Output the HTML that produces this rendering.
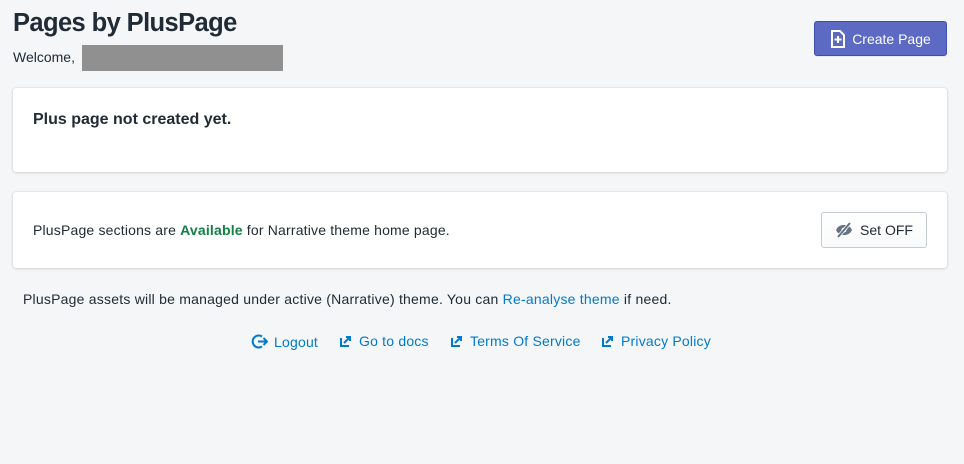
<!DOCTYPE html>
<html><head><style>
*{margin:0;padding:0;box-sizing:border-box}
body{width:964px;height:464px;background:#f4f6f8;font-family:"Liberation Sans",sans-serif;color:#212b36;position:relative;overflow:hidden}
.abs{position:absolute}
h1{position:absolute;left:13px;top:9px;font-size:25.5px;font-weight:bold;color:#212b36;letter-spacing:-0.6px}
.wel{left:13px;top:49px;font-size:14px;color:#212b36}
.grey{left:82px;top:45px;width:201px;height:26px;background:#909090}
.btn1{left:814px;top:21px;width:133px;height:35px;background:#5c6ac4;border:1px solid #3f4eae;border-radius:3px;color:#fff;font-size:14px;display:flex;align-items:center;justify-content:center;gap:6px;box-shadow:0 1px 0 rgba(22,29,37,.05)}
.card{left:13px;width:934px;background:#fff;border-radius:3px;box-shadow:0 0 0 1px rgba(63,63,68,.05),0 1px 3px 0 rgba(63,63,68,.15)}
.t1{left:33px;top:111px;font-size:16px;font-weight:bold}
.t2{left:33px;top:222px;font-size:14px;letter-spacing:0.18px}
.btn2{left:821px;top:212px;width:106px;height:36px;background:linear-gradient(#fff,#f9fafb);border:1px solid #c4cdd5;border-radius:3px;font-size:14px;display:flex;align-items:center;justify-content:center;gap:7px;color:#212b36}
.t3{left:23px;top:291px;font-size:14px;letter-spacing:0.22px}
a{color:#007ace;text-decoration:none}
.links{top:333px;font-size:14px;color:#007ace;display:flex;align-items:center;letter-spacing:0.2px}
</style></head><body>
<h1>Pages by PlusPage</h1>
<div class="abs wel">Welcome,</div>
<div class="abs grey"></div>
<div class="abs btn1"><svg width="16" height="18" viewBox="0 0 16 18"><path d="M2 1h8l4 4v12H2z" fill="none" stroke="#fff" stroke-width="2"/><path d="M8 6v7M4.5 9.5h7" stroke="#fff" stroke-width="2"/></svg>Create Page</div>
<div class="abs card" style="top:88px;height:84px"></div>
<div class="abs t1">Plus page not created yet.</div>
<div class="abs card" style="top:192px;height:76px"></div>
<div class="abs t2">PlusPage sections are <b style="color:#108043">Available</b> for Narrative theme home page.</div>
<div class="abs btn2"><svg width="18" height="16" viewBox="0 0 18 16"><path d="M1 8c2-4 5-5 8-5s6 1 8 5c-2 4-5 5-8 5S3 12 1 8z" fill="#637381"/><circle cx="9" cy="8" r="2.5" fill="#fff"/><path d="M3 15L15 1" stroke="#fff" stroke-width="3.5"/><path d="M3 15L15 1" stroke="#637381" stroke-width="2"/></svg>Set OFF</div>
<div class="abs t3">PlusPage assets will be managed under active (Narrative) theme. You can <a>Re-analyse theme</a> if need.</div>
<div class="abs links" style="left:251px"><svg width="17" height="17" viewBox="0 0 17 17" style="margin-right:6px"><path d="M11 3.5A6 6 0 1 0 11 13.5" fill="none" stroke="#007ace" stroke-width="2"/><path d="M7 8.5h9M12.5 5l3.5 3.5-3.5 3.5" fill="none" stroke="#007ace" stroke-width="2"/></svg>Logout</div>
<div class="abs links" style="left:340px"><svg width="11" height="11" viewBox="0 0 11 11" style="margin-right:8px"><path d="M1 2v8h8" fill="none" stroke="#007ace" stroke-width="2"/><path d="M4 7l6-6M6 1h4v4" fill="none" stroke="#007ace" stroke-width="2"/></svg>Go to docs</div>
<div class="abs links" style="left:451px"><svg width="11" height="11" viewBox="0 0 11 11" style="margin-right:8px"><path d="M1 2v8h8" fill="none" stroke="#007ace" stroke-width="2"/><path d="M4 7l6-6M6 1h4v4" fill="none" stroke="#007ace" stroke-width="2"/></svg>Terms Of Service</div>
<div class="abs links" style="left:602px"><svg width="11" height="11" viewBox="0 0 11 11" style="margin-right:8px"><path d="M1 2v8h8" fill="none" stroke="#007ace" stroke-width="2"/><path d="M4 7l6-6M6 1h4v4" fill="none" stroke="#007ace" stroke-width="2"/></svg>Privacy Policy</div>
</body></html>
